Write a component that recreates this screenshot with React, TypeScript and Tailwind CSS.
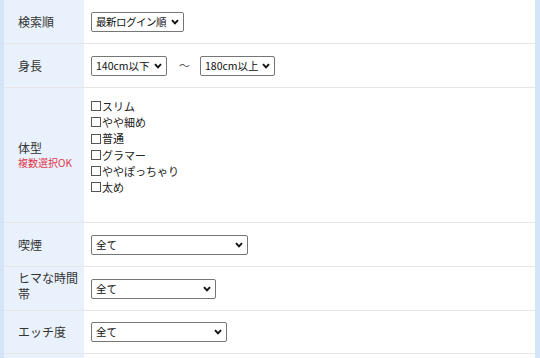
import { ReactNode } from 'react';

const font = { fontFamily: '"Noto Sans CJK JP", "Noto Sans", sans-serif' };

function Chevron() {
  return (
    <svg width="8" height="6" viewBox="0 0 8 6" className="pointer-events-none absolute right-[5px] top-1/2 -translate-y-1/2">
      <path d="M1 1.2 L4 4.4 L7 1.2" fill="none" stroke="#111" strokeWidth="1.9" />
    </svg>
  );
}

function Select({ value, width, tight = false }: { value: string; width: string; tight?: boolean }) {
  return (
    <div className={`relative h-[20px] ${width}`}>
      <select
        defaultValue={value}
        className={`block h-[20px] w-full appearance-none rounded-[2px] border border-[#767676] bg-white py-0 pl-[4px] pr-[12px] text-[10.5px] leading-[18px] text-[#111] outline-none ${tight ? 'tracking-[-0.5px]' : ''}`}
        style={font}
      >
        <option>{value}</option>
      </select>
      <Chevron />
    </div>
  );
}

function Row({ label, height, children, top = false }: { label: ReactNode; height: string; children: ReactNode; top?: boolean }) {
  return (
    <div className={`flex ${height} border-b border-[#e6e6e6]`}>
      <div className="flex w-[80px] shrink-0 items-center bg-[#e9f2fc] pl-[14px] pr-[4px] text-[12px] leading-[16px] text-[#333]">
        {label}
      </div>
      <div className={`flex flex-1 pl-[7px] ${top ? 'items-start pt-[10px]' : 'items-center'}`}>{children}</div>
    </div>
  );
}

const bodyTypes = ['スリム', 'やや細め', '普通', 'グラマー', 'ややぽっちゃり', '太め'];

export default function App() {
  return (
    <div className="h-[358px] w-[540px] overflow-hidden bg-white" style={font}>
      <div className="border-l-[4px] border-r-[5px] border-[#d3e5f6]">
        <Row label="検索順" height="h-[44px]">
          <Select value="最新ログイン順" width="w-[93px]" tight />
        </Row>
        <Row label="身長" height="h-[44px]">
          <div className="flex items-center">
            <Select value="140cm以下" width="w-[76px]" />
            <span className="ml-[12px] mr-[10px] text-[11px] text-[#555]">～</span>
            <Select value="180cm以上" width="w-[75px]" />
          </div>
        </Row>
        <Row
          label={
            <div>
              <div>体型</div>
              <div className="text-[10px] leading-[14px] text-[#e0334a]">複数選択OK</div>
            </div>
          }
          height="h-[135px]"
          top
        >
          <div className="flex flex-col text-[11px] leading-[16.2px] text-[#222]">
            {bodyTypes.map((t) => (
              <label key={t} className="flex items-center">
                <span className="mr-[1px] inline-block h-[10px] w-[10px] border border-[#555] bg-white" />
                {t}
              </label>
            ))}
          </div>
        </Row>
        <Row label="喫煙" height="h-[44px]">
          <Select value="全て" width="w-[157px]" />
        </Row>
        <Row label={<span className="-mt-[6px]">ヒマな時間帯</span>} height="h-[44px]">
          <Select value="全て" width="w-[125px]" />
        </Row>
        <Row label="エッチ度" height="h-[43px]">
          <Select value="全て" width="w-[136px]" />
        </Row>
        <Row label="" height="h-[44px]">
          <span />
        </Row>
      </div>
    </div>
  );
}
